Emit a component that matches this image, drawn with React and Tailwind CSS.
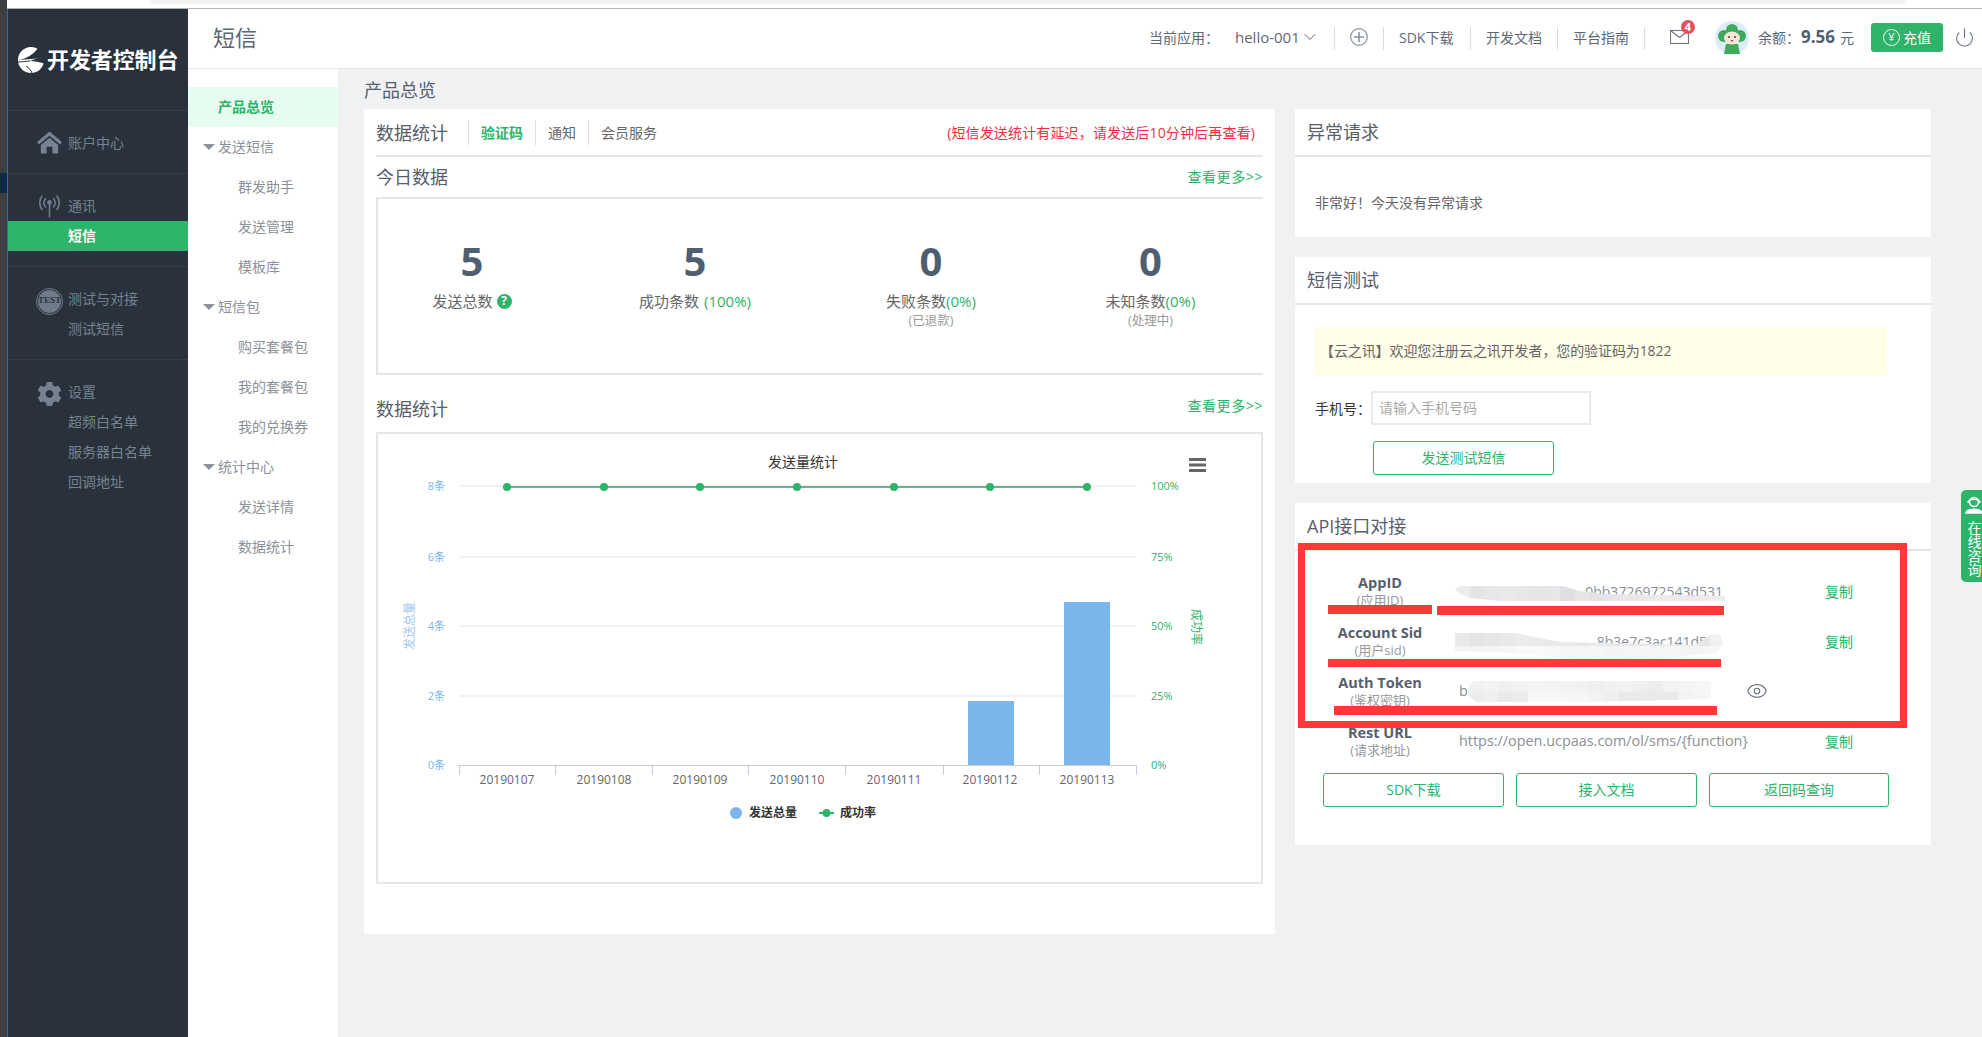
import React from 'react';
import { ChevronDown, Eye, Power } from 'lucide-react';
import { FaCog } from 'react-icons/fa';

const green = 'text-[#2db36a]';

const subMenu = [
  { label: '发送短信', group: true },
  { label: '群发助手' },
  { label: '发送管理' },
  { label: '模板库' },
  { label: '短信包', group: true },
  { label: '购买套餐包' },
  { label: '我的套餐包' },
  { label: '我的兑换券' },
  { label: '统计中心', group: true },
  { label: '发送详情' },
  { label: '数据统计' },
];

const days = ['20190107', '20190108', '20190109', '20190110', '20190111', '20190112', '20190113'];
const dayX = [507, 604, 700, 797, 894, 990, 1087];
const tickX = [459, 555, 652, 748, 845, 943, 1039, 1136];
const axis = [
  { y: 486, left: '8条', right: '100%' },
  { y: 557, left: '6条', right: '75%' },
  { y: 626, left: '4条', right: '50%' },
  { y: 696, left: '2条', right: '25%' },
  { y: 765, left: '0条', right: '0%' },
];

function Smudge({ id, width, height, points, rows, className }) {
  return (
    <svg width={width} height={height} className={className}>
      <defs>
        <clipPath id={id}>
          <polygon points={points} />
        </clipPath>
      </defs>
      <g clipPath={`url(#${id})`}>
        {rows.map((row, r) =>
          row.map((c, i) => (
            <rect key={`${r}-${i}`} x={i * 15} y={(r * height) / rows.length} width="15.5" height={height / rows.length + 0.5} fill={c} />
          ))
        )}
      </g>
    </svg>
  );
}

function Logo() {
  return (
    <svg width="26" height="26" viewBox="0 0 26 26" className="shrink-0">
      <circle cx="13" cy="13" r="13" fill="#fff" />
      {/* dark swoosh that opens the circle on its right side */}
      <path d="M0 13 C8 12 15 8 20 1 L27 4 L27 11 C21 11 16 12 12 14 C17 14 22 15 27 17 L27 11 Z" fill="#29323c" />
      <path d="M0 15 C5 15 9 14 12 14" stroke="#29323c" strokeWidth="1" fill="none" />
      <path d="M8 19 C11 21 13 23 14 26" stroke="#29323c" strokeWidth="1" fill="none" />
    </svg>
  );
}

function HomeIcon() {
  return (
    <svg width="26" height="23" viewBox="0 0 26 23" fill="#76828f">
      <path d="M13 0 L26 11 L24 13.500 L13 4.500 L2 13.500 L0 11 Z" />
      <path d="M13 6.500 L22 14 V23 H16 V16 H10 V23 H4 V14 Z" />
    </svg>
  );
}

function SignalIcon() {
  return (
    <svg width="25" height="24" viewBox="0 0 25 24" fill="none" stroke="#6f7b89" strokeWidth="1.6" strokeLinecap="round">
      <circle cx="12.5" cy="8.5" r="1.6" fill="#6f7b89" />
      <path d="M12.5 10 V23" />
      <path d="M8.5 4.5 C6.5 7 6.5 10.5 8.5 13" />
      <path d="M16.5 4.5 C18.5 7 18.5 10.5 16.5 13" />
      <path d="M5 2 C2 6 2 11.500 5 15.500" />
      <path d="M20 2 C23 6 23 11.500 20 15.500" />
    </svg>
  );
}

function Avatar() {
  return (
    <svg width="34" height="34" viewBox="0 0 34 34" className="shrink-0">
      <circle cx="17" cy="17" r="17" fill="#dcedf8" />
      <circle cx="17" cy="9" r="6" fill="#3fa95c" />
      <circle cx="9" cy="15" r="6" fill="#3fa95c" />
      <circle cx="25" cy="15" r="6" fill="#3fa95c" />
      <path d="M11 23 H23 L25 33 H9 Z" fill="#3fa95c" />
      <ellipse cx="17" cy="17" rx="8" ry="6.500" fill="#f7e6d6" />
      <circle cx="14" cy="16" r="0.9" fill="#333" />
      <circle cx="20" cy="16" r="0.9" fill="#333" />
      <path d="M15.500 19 H18.500 L17 21 Z" fill="#b4433f" />
    </svg>
  );
}

function SideRow({ children, icon, iconClass, active }) {
  return (
    <div className={`h-[30px] pb-[2px] flex items-center text-[14px] ${icon ? 'pl-[29px]' : 'pl-[60px]'} ${active ? 'bg-[#2db36a] text-white font-bold' : 'text-[#76828f]'}`}>
      {icon && <span className={`w-[25px] mr-[6px] flex justify-center ${iconClass}`}>{icon}</span>}
      {children}
    </div>
  );
}

function Sidebar() {
  return (
    <div className="w-[181px] shrink-0 bg-[#29323c] border-l border-[#3b66ae]">
      <div className="h-[102px] border-b border-[#343d4b] pl-[10px] flex items-center gap-[3px]">
        <Logo />
        <span className="text-[22px] font-bold text-white whitespace-nowrap tracking-[-0.1px]">开发者控制台</span>
      </div>
      <div className="h-[63px] border-b border-[#343d4b] pt-[2px] flex items-center">
        <div className="flex-1">
          <SideRow icon={<HomeIcon />}>账户中心</SideRow>
        </div>
      </div>
      <div className="h-[93px] border-b border-[#343d4b] pt-[17px]">
        <SideRow icon={<SignalIcon />} iconClass="mt-[2px]">通讯</SideRow>
        <SideRow active>短信</SideRow>
      </div>
      <div className="h-[93px] border-b border-[#343d4b] pt-[17px]">
        <SideRow
          iconClass="mt-[6px]"
          icon={
            <span className="w-[25px] h-[25px] rounded-full bg-[#6f7b89] border border-[#29323c] outline outline-[#6f7b89] flex items-center justify-center text-[9px] font-bold text-[#29323c] font-['Liberation_Serif',serif]">
              TEST
            </span>
          }
        >
          测试与对接
        </SideRow>
        <SideRow>测试短信</SideRow>
      </div>
      <div className="pt-[17px]">
        <SideRow icon={<FaCog size={26} color="#76828f" />} iconClass="mt-[6px]">设置</SideRow>
        <SideRow>超频白名单</SideRow>
        <SideRow>服务器白名单</SideRow>
        <SideRow>回调地址</SideRow>
      </div>
    </div>
  );
}

function SubMenu() {
  return (
    <div className="w-[150px] shrink-0 bg-white pt-[18px] text-[14px] text-[#8c9199]">
      <div className="h-[40px] pb-[2px] bg-[#e6fcef] pl-[30px] flex items-center font-bold text-[#2db36a]">产品总览</div>
      {subMenu.map((item) =>
        item.group ? (
          <div key={item.label} className="h-[40px] pb-[2px] pl-[15px] flex items-center">
            <span className="w-0 h-0 mt-[2px] border-x-[6px] border-t-[6px] border-x-transparent border-t-[#8c9199] mr-[3px]" />
            {item.label}
          </div>
        ) : (
          <div key={item.label} className="h-[40px] pb-[2px] pl-[50px] flex items-center">
            {item.label}
          </div>
        )
      )}
    </div>
  );
}

function Divider({ className }) {
  return <span className={`w-px h-[23px] mt-[3px] bg-[#dcdcdc] shrink-0 ${className}`} />;
}

function Header() {
  return (
    <div className="h-[60px] shrink-0 bg-white border-b border-[#e6e7e9] flex items-center pl-[25px] pb-[3px] text-[14px] text-[#5d6875]">
      <span className="text-[22px] text-[#5b6672]">短信</span>
      <div className="ml-auto flex items-center pr-[7px]">
        <span className="w-[86px]">当前应用：</span>
        <span className="w-[67px] text-[15px] whitespace-nowrap">hello-001</span>
        <ChevronDown size={20} strokeWidth={1.2} className="mx-[-2px]" />
        <Divider className="ml-[16px]" />
        <svg width="18" height="18" viewBox="0 0 18 18" fill="none" stroke="#8a929c" strokeWidth="1.2" className="ml-[15px]">
          <circle cx="9" cy="9" r="8.300" />
          <path d="M9 4 V14 M4 9 H14" strokeWidth="1.600" />
        </svg>
        <Divider className="ml-[15px]" />
        <span className="w-[56px] ml-[15px] whitespace-nowrap">SDK下载</span>
        <Divider className="ml-[15px]" />
        <span className="w-[56px] ml-[15px]">开发文档</span>
        <Divider className="ml-[15px]" />
        <span className="w-[56px] ml-[15px]">平台指南</span>
        <Divider className="ml-[15px]" />
        <span className="relative ml-[25px] w-[19px] h-[14px]">
          <svg width="19" height="14" viewBox="0 0 19 14" fill="none" stroke="#6b7480" strokeWidth="1.100" className="block">
            <rect x="0.500" y="0.500" width="18" height="13" />
            <path d="M0.500 0.500 L9.500 7.500 L18.500 0.500" />
          </svg>
          <span className="absolute left-[11px] top-[-10px] w-[14px] h-[14px] rounded-full bg-[#e9505b] text-white text-[11px] font-bold flex items-center justify-center">4</span>
        </span>
        <span className="ml-[26px] mt-[2px]">
          <Avatar />
        </span>
        <span className="ml-[9px] w-[43px]">余额：</span>
        <span className="text-[17px] font-bold text-[#4f5f70] w-[39px] whitespace-nowrap">9.56</span>
        <span>元</span>
        <span className="ml-[17px] mt-[1px] w-[72px] h-[29px] rounded-[3px] bg-[#2db36a] text-white flex items-center pl-[12px] gap-[3px]">
          <span className="w-[17px] h-[17px] rounded-full border border-white flex items-center justify-center text-[11px]">¥</span>
          充值
        </span>
        <Power size={21} strokeWidth={1.3} color="#6b7786" className="ml-[11px]" />
      </div>
    </div>
  );
}

function MoreLink() {
  return <span className={`text-[14px] ${green} tracking-[0.6px]`}>查看更多&gt;&gt;</span>;
}

function Stat({ value, children, sub }) {
  return (
    <div className="flex flex-col items-center">
      <div className="h-[40px] leading-[40px] text-[40px] font-bold text-[#4f5f70]">{value}</div>
      <div className="mt-[10px] h-[20px] flex items-center text-[15px] text-[#666] whitespace-nowrap">{children}</div>
      {sub && <div className="mt-[1px] h-[18px] flex items-center text-[12.500px] text-[#999]">{sub}</div>}
    </div>
  );
}

function Chart() {
  return (
    <svg width="883" height="447" viewBox="378 434 883 447">
      <text x="803" y="467" textAnchor="middle" fontSize="14" fill="#333">发送量统计</text>
      <path d="M1189 459.500 H1206 M1189 465 H1206 M1189 470.500 H1206" stroke="#666" strokeWidth="3" />
      {axis.map((a) => (
        <g key={a.y}>
          {a.y !== 765 && <line x1="459" x2="1136" y1={a.y} y2={a.y} stroke="#e6e6e6" strokeWidth="1.200" />}
          <text x="445" y={a.y + 4} textAnchor="end" fontSize="11" fill="#7cb5ec">{a.left}</text>
          <text x="1151" y={a.y + 4} fontSize="11" fill="#2db36a">{a.right}</text>
        </g>
      ))}
      <line x1="458" x2="1137" y1="765.500" y2="765.500" stroke="#c4cde0" />
      {tickX.map((x) => (
        <line key={x} x1={x + 0.5} x2={x + 0.5} y1="765" y2="775" stroke="#c4cde0" />
      ))}
      <rect x="968" y="701" width="46" height="64" fill="#7cb5ec" />
      <rect x="1064" y="602" width="46" height="163" fill="#7cb5ec" />
      <line x1="507" x2="1087" y1="487" y2="487" stroke="#2f9e63" strokeWidth="1.600" />
      {dayX.map((x, i) => (
        <g key={x}>
          <circle cx={x} cy="487" r="4" fill="#2db36a" />
          <text x={x} y="784" textAnchor="middle" fontSize="12" fill="#666">{days[i]}</text>
        </g>
      ))}
      <text transform="translate(409 626) rotate(-90)" textAnchor="middle" dominantBaseline="central" fontSize="12" fill="#9cc8f2">发送总量</text>
      <text transform="translate(1196 627) rotate(90)" textAnchor="middle" dominantBaseline="central" fontSize="12" fill="#2db36a">成功率</text>
      <circle cx="736" cy="813" r="6" fill="#7cb5ec" />
      <text x="749" y="817" fontSize="12" fontWeight="bold" fill="#333">发送总量</text>
      <line x1="819" x2="834" y1="813" y2="813" stroke="#2db36a" strokeWidth="2" />
      <circle cx="826.500" cy="813" r="4" fill="#2db36a" />
      <text x="840" y="817" fontSize="12" fontWeight="bold" fill="#333">成功率</text>
    </svg>
  );
}

function OverviewCard() {
  return (
    <div className="w-[911px] shrink-0 bg-white px-[12px] pb-[50px]">
      <div className="h-[48px] border-b-2 border-[#e6e6e6] flex items-center text-[14px] text-[#666]">
        <span className="text-[18px] text-[#56606c] w-[92px] pt-[2px]">数据统计</span>
        <span className="h-[25px] border-l border-[#dedede] pl-[12px] w-[67px] font-bold text-[#2db36a] flex items-center">验证码</span>
        <span className="h-[25px] border-l border-[#dedede] pl-[12px] w-[53px] flex items-center">通知</span>
        <span className="h-[25px] border-l border-[#dedede] pl-[12px] flex items-center">会员服务</span>
        <span className="ml-auto mr-[8px] tracking-[0.15px] text-[#ed2f3f]">(短信发送统计有延迟，请发送后10分钟后再查看)</span>
      </div>
      <div className="h-[40px] flex items-center justify-between">
        <span className="text-[18px] text-[#56606c]">今日数据</span>
        <span className="mb-[2px]">
          <MoreLink />
        </span>
      </div>
      <div className="h-[178px] border-2 border-r-0 border-[#e6e6e6] pt-[42px] grid grid-cols-[188px_258px_214px_1fr] items-start">
        <Stat value="5">
          发送总数
          <span className="ml-[4px] w-[15px] h-[15px] rounded-full bg-[#2db36a] text-white text-[12px] font-bold flex items-center justify-center">?</span>
        </Stat>
        <Stat value="5">
          成功条数<span className={`ml-[5px] ${green}`}>(100%)</span>
        </Stat>
        <Stat value="0" sub="(已退款)">
          失败条数<span className={green}>(0%)</span>
        </Stat>
        <Stat value="0" sub="(处理中)">
          未知条数<span className={green}>(0%)</span>
        </Stat>
      </div>
      <div className="h-[57px] pt-[12px] flex items-center justify-between">
        <span className="text-[18px] text-[#56606c]">数据统计</span>
        <span className="mb-[9px]">
          <MoreLink />
        </span>
      </div>
      <div className="h-[452px] border-2 border-[#e6e6e6]">
        <Chart />
      </div>
    </div>
  );
}

function CardTitle({ children }) {
  return <div className="h-[48px] pl-[12px] pt-[1px] border-b-2 border-[#e6e6e6] flex items-center text-[18px] text-[#56606c]">{children}</div>;
}

function GreenButton({ children, className }) {
  return <div className={`h-[34px] pb-[2px] border border-[#2db36a] rounded-[3px] ${green} text-[14px] flex items-center justify-center ${className}`}>{children}</div>;
}

function ApiRow({ title, sub, children }) {
  return (
    <div className="h-[50px] flex items-center pl-[12px]">
      <div className="w-[146px] text-center">
        <div className="h-[17px] mt-[1px] leading-[18px] text-[14.500px] font-bold text-[#56606c]">{title}</div>
        <div className="h-[18px] leading-[18px] text-[13px] text-[#999]">{sub}</div>
      </div>
      <div className="relative ml-[6px] w-[366px] h-full flex items-center text-[14.400px] text-[#8a8f98] whitespace-nowrap">{children}</div>
      <span className={`text-[14px] ${green}`}>{title === 'Auth Token' ? '' : '复制'}</span>
    </div>
  );
}

function ApiCard() {
  return (
    <div className="relative bg-white h-[342px]">
      <CardTitle>API接口对接</CardTitle>
      <div className="pt-[15px]">
        <ApiRow title="AppID" sub="(应用ID)">
          <span className="w-[264px] text-right text-[14px]">0bb3726972543d531</span>
          <Smudge
            id="mask-app"
            width={270}
            height={15}
            points="0,3 5,0 108,0 125,5 150,8 270,10 270,15 45,15 15,12 5,8"
            rows={[['#ececed', '#e3e4e6', '#e6e7e8', '#e9e9ea', '#e6e7e8', '#e4e5e6', '#e6e7e8', '#dfe0e3', '#e5e5e6', '#e2e3e5', '#e4e5e6', '#e7e7e8', '#e6e7e8', '#e8e9ea', '#eaeaeb', '#eaeaeb', '#ececed', '#ededee']]}
            className="absolute left-[-4px] top-[20px]"
          />
        </ApiRow>
        <ApiRow title="Account Sid" sub="(用户sid)">
          <span className="w-[264px] text-right text-[14px]">8b3e7c3ac141d521</span>
          <Smudge
            id="mask-sid"
            width={268}
            height={26}
            points="0,0 60,0 105,9 240,12 255,2 265,1 268,10 262,20 200,26 120,26 60,20 0,18"
            rows={[
              ['#e9e9ea', '#e4e5e6', '#e7e7e8', '#e9e9ea', '#ececec', '#eaeaeb', '#e8e8e9', '#e9e9ea', '#e7e7e8', '#ebebec', '#e8e9ea', '#e9e9ea', '#e7e8e9', '#e9e9ea', '#ebebec', '#e8e9ea', '#e6e7e8', '#f0f1f1'],
              ['#f3f3f4', '#f2f3f3', '#f5f5f6', '#f6f6f7', '#f8f9f9', '#fafafa', '#f6f7f7', '#f5f5f5', '#f4f5f5', '#f5f6f6', '#f3f4f4', '#f5f5f6', '#f6f6f6', '#f4f5f5', '#f5f6f6', '#f3f4f4', '#f5f5f5', '#f6f6f6'],
            ]}
            className="absolute left-[-4px] top-[17px]"
          />
        </ApiRow>
        <ApiRow title="Auth Token" sub="(鉴权密钥)">
          <span className="w-[287px]">b</span>
          <Eye size={22} strokeWidth={1.3} color="#6f7680" />
          <Smudge
            id="mask-token"
            width={243}
            height={21}
            points="6,0 243,0 243,18 120,21 8,21 0,14 0,7"
            rows={[
              ['#f0f1f2', '#f2f3f4', '#f0f0f1', '#f1f2f3', '#f4f4f5', '#f2f3f3', '#f2f2f3', '#f0f1f2', '#eeeff0', '#f0f1f1', '#f2f2f3', '#eeeff0', '#ecedee', '#f3f3f4', '#f4f5f6', '#f6f6f7', '#f7f7f8'],
              ['#ebecee', '#eeeff0', '#e8e9ea', '#ebecee', '#f7f7f9', '#f6f7f8', '#f7f7f8', '#f6f6f8', '#f2f3f4', '#eeeff0', '#e8e9ea', '#e9eaec', '#e8e9eb', '#e8e9ea', '#f2f2f3', '#f5f5f6', '#f6f6f8'],
            ]}
            className="absolute left-[9px] top-[15px]"
          />
        </ApiRow>
        <ApiRow title="Rest URL" sub="(请求地址)">
          https://open.ucpaas.com/ol/sms/{'{function}'}
        </ApiRow>
      </div>
      <div className="mt-[7px] ml-[28px] flex gap-[12px]">
        <GreenButton className="w-[181px]">SDK下载</GreenButton>
        <GreenButton className="w-[181px]">接入文档</GreenButton>
        <GreenButton className="w-[180px]">返回码查询</GreenButton>
      </div>
      {/* red marks drawn over the screenshot */}
      <div className="absolute left-[3px] top-[40px] w-[609px] h-[185px] border-[7px] border-[#ff3838]" />
      <div className="absolute left-[33px] top-[102px] w-[104px] h-[9px] bg-[#ff3838]" />
      <div className="absolute left-[142px] top-[103px] w-[287px] h-[9px] bg-[#ff3838]" />
      <div className="absolute left-[33px] top-[156px] w-[393px] h-[8px] bg-[#ff3838]" />
      <div className="absolute left-[39px] top-[203px] w-[383px] h-[9px] bg-[#ff3838]" />
    </div>
  );
}

function RightColumn() {
  return (
    <div className="w-[636px] ml-[20px] shrink-0 flex flex-col gap-[20px]">
      <div className="bg-white h-[128px]">
        <CardTitle>异常请求</CardTitle>
        <div className="pl-[20px] pt-[36px] text-[14px] leading-[20px] text-[#666]">非常好！今天没有异常请求</div>
      </div>
      <div className="bg-white h-[226px]">
        <CardTitle>短信测试</CardTitle>
        <div className="pl-[20px] pt-[22px]">
          <div className="w-[572px] h-[48px] pb-[2px] bg-[#fffce8] pl-[5px] flex items-center text-[14px] tracking-[-0.1px] text-[#666]">【云之讯】欢迎您注册云之讯开发者，您的验证码为1822</div>
          <div className="mt-[16px] flex items-center">
            <span className="w-[56px] text-[14px] text-[#333]">手机号：</span>
            <div className="w-[220px] h-[34px] pb-[2px] border-2 border-[#e8eaee] pl-[6px] flex items-center text-[14px] text-[#aaa]">请输入手机号码</div>
          </div>
          <GreenButton className="mt-[16px] ml-[58px] w-[181px]">发送测试短信</GreenButton>
        </div>
      </div>
      <ApiCard />
    </div>
  );
}

export default function App() {
  return (
    <div className="relative w-[1982px] h-[1037px] overflow-hidden flex font-['Open_Sans','Noto_Sans_CJK_SC',sans-serif]">
      <div className="w-[7px] shrink-0 bg-[#3c4043] pt-[173px]">
        <div className="h-[20px] bg-[#0f2a44]" />
      </div>
      <div className="flex-1 flex flex-col min-w-0">
        <div className="h-[9px] shrink-0 bg-white border-b border-[#b5b5b5] pl-[143px] pr-[76px]">
          <div className="h-[4px] bg-[#f1f2f4] rounded-bl-[6px] rounded-br-[6px]" />
        </div>
        <div className="flex-1 flex min-h-0">
          <Sidebar />
          <div className="flex-1 flex flex-col min-w-0">
            <Header />
            <div className="flex-1 flex min-h-0">
              <SubMenu />
              <div className="flex-1 bg-[#eff1f3] pl-[26px]">
                <div className="h-[40px] pt-[2px] flex items-center text-[18px] text-[#56606c]">产品总览</div>
                <div className="flex items-start">
                  <OverviewCard />
                  <RightColumn />
                </div>
              </div>
            </div>
          </div>
        </div>
      </div>
      <div className="absolute right-0 top-[490px] w-[21px] h-[92px] bg-[#2db36a] rounded-l-[5px] flex flex-col items-center text-white pt-[6px]">
        <svg width="18" height="18" viewBox="0 0 18 18" fill="none" stroke="#fff" strokeWidth="1.500" className="shrink-0 ml-[4px]">
          <circle cx="9" cy="6" r="4.500" />
          <path d="M3 7 C3 2 15 2 15 7" />
          <path d="M1 17 C2 12 16 12 17 17 Z" fill="#fff" />
        </svg>
        <span className="mt-[7px] ml-[4px] [writing-mode:vertical-rl] text-[14px] leading-[14px] whitespace-nowrap">在线咨询</span>
      </div>
    </div>
  );
}
